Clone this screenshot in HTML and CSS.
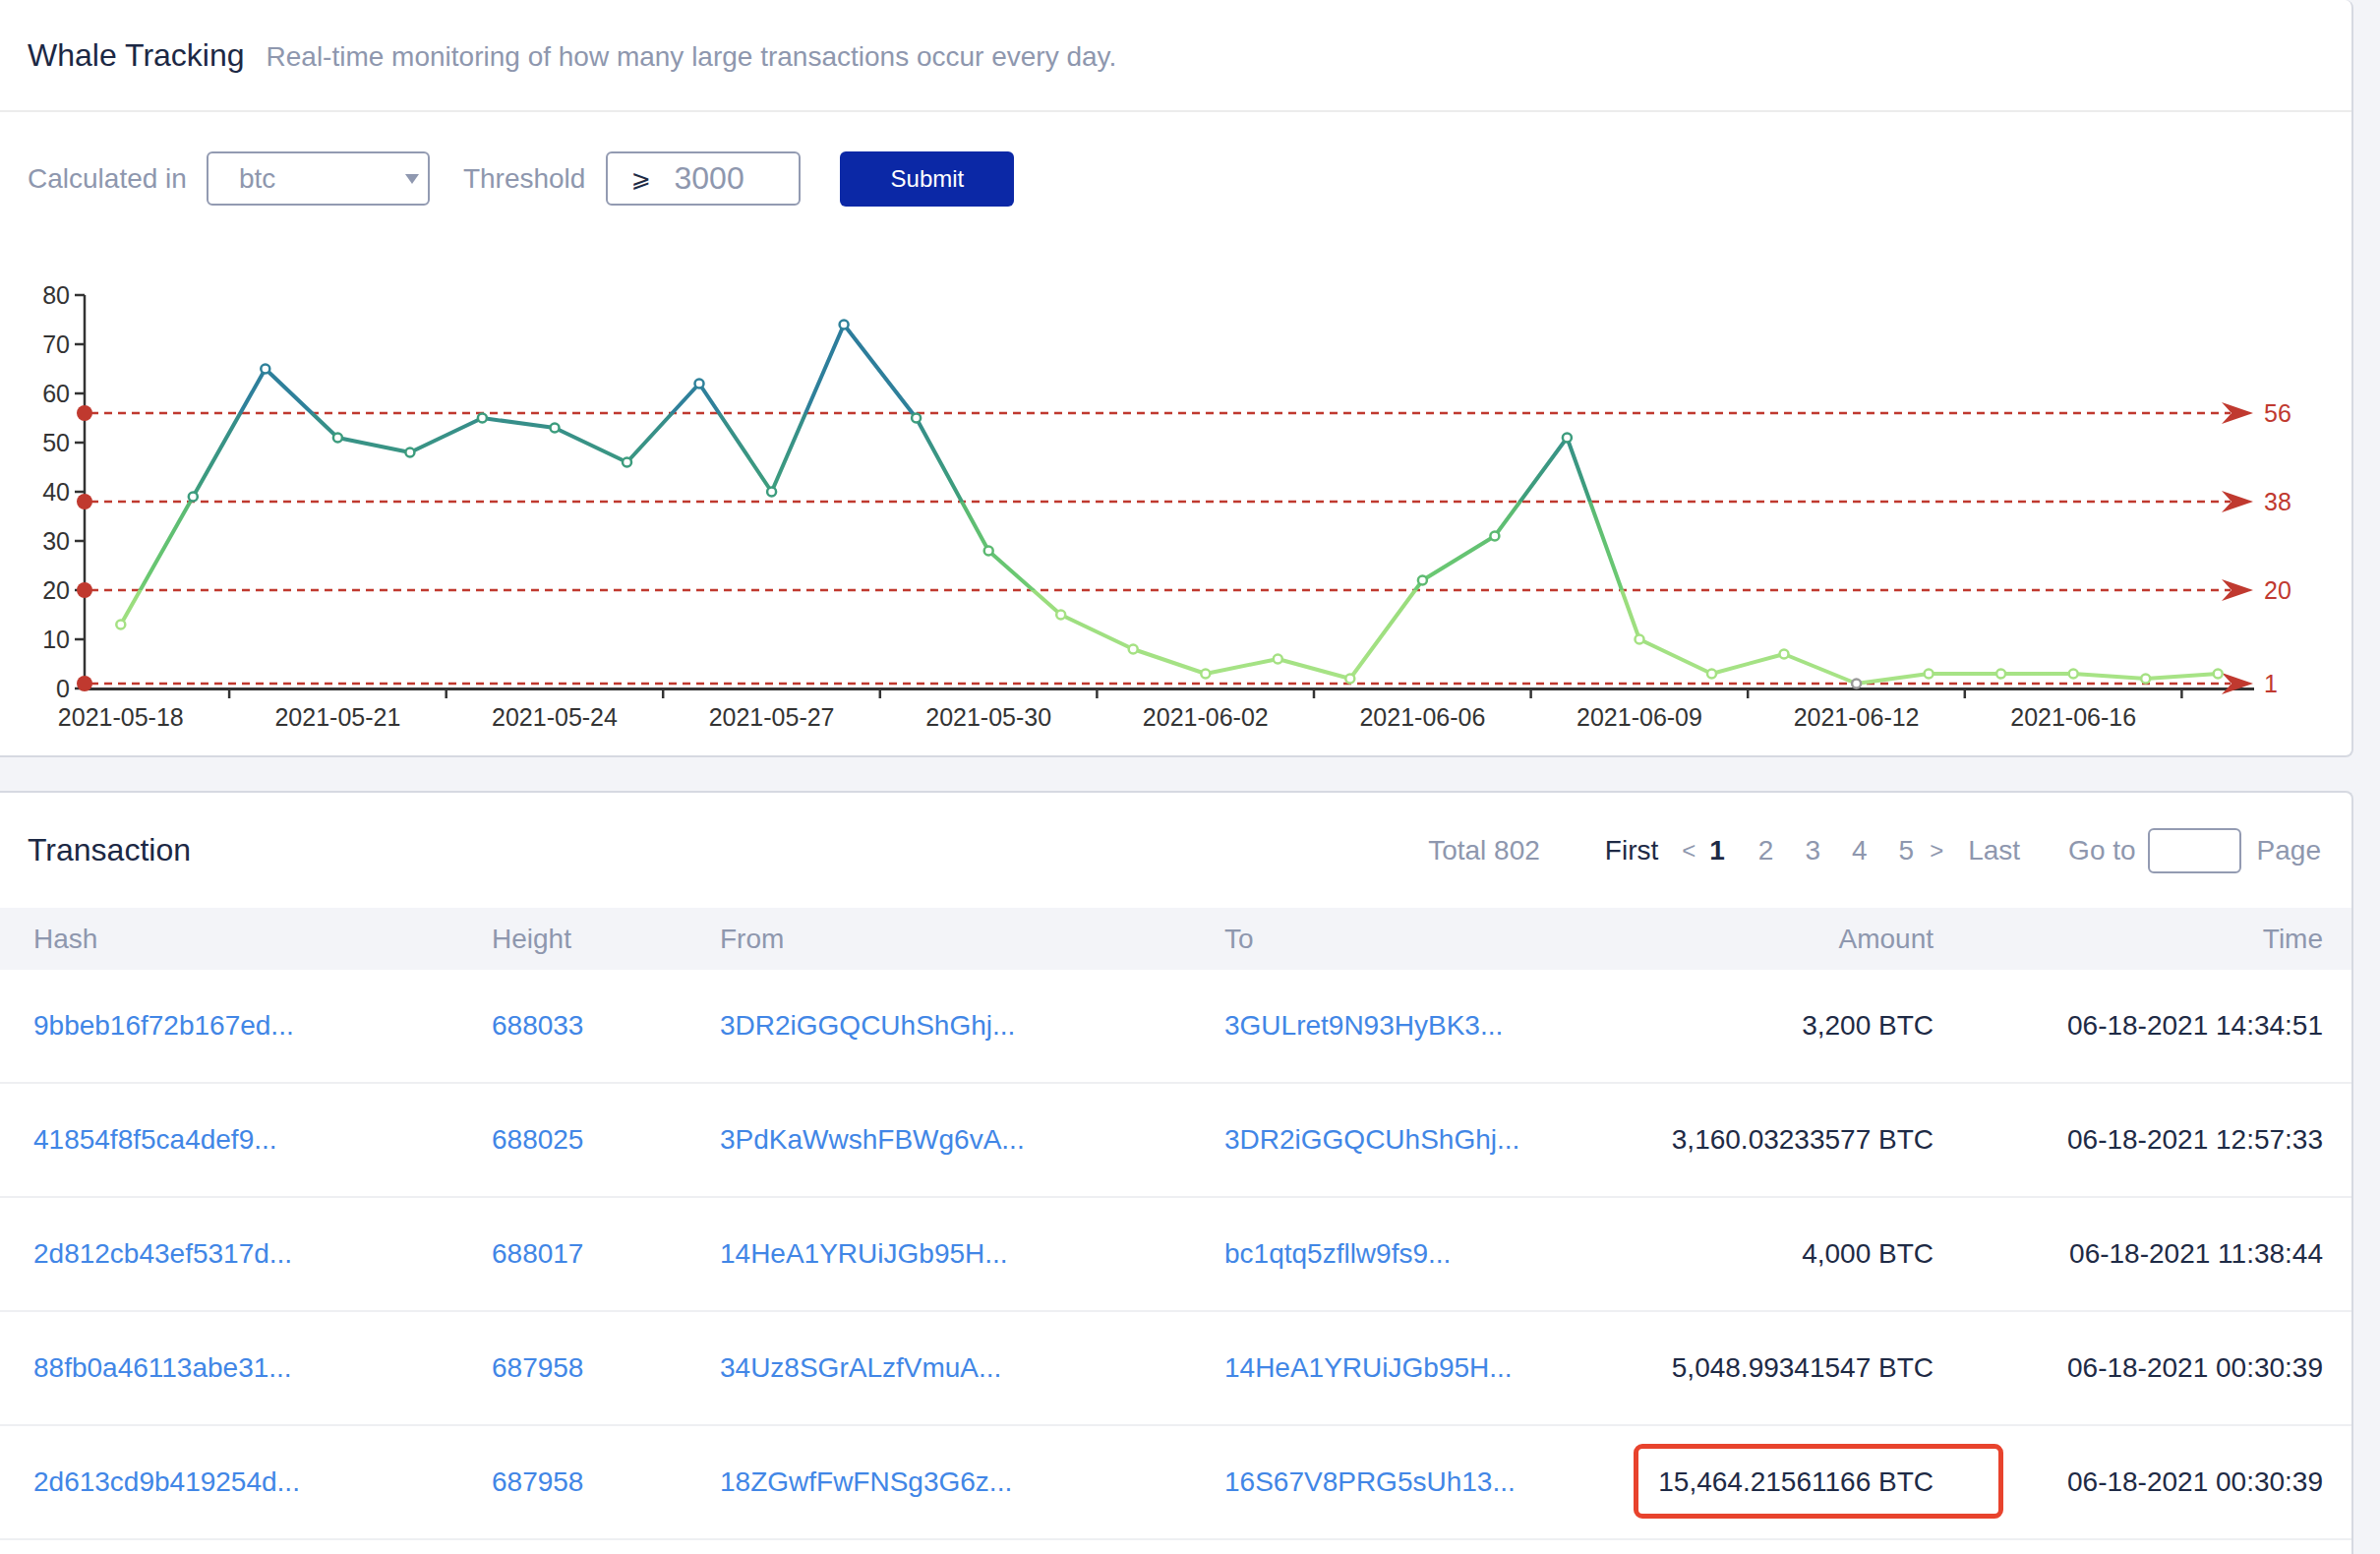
FILE: index.html
```html
<!DOCTYPE html>
<html lang="en">
<head>
<meta charset="utf-8">
<title>Whale Tracking</title>
<link rel="stylesheet" href="styles.css">
</head>
<body>
<div class="page">
  <section class="card chart-card">
    <header class="card-head">
      <h1 class="title">Whale Tracking</h1>
      <p class="subtitle">Real-time monitoring of how many large transactions occur every day.</p>
    </header>
    <div class="controls">
      <span class="ctl-label">Calculated in</span>
      <div class="select">
        <span>btc</span>
        <svg class="caret" width="14" height="10" viewBox="0 0 14 10"><polygon points="0,0 14,0 7,10" fill="#8f98b0"/></svg>
      </div>
      <span class="ctl-label threshold-label">Threshold</span>
      <div class="num-input"><span class="ge">⩾</span><span class="num">3000</span></div>
      <button class="submit" type="button">Submit</button>
    </div>
    <svg class="chart" width="2391" height="559" viewBox="0 209 2391 559" font-family="Liberation Sans, Arial, sans-serif">
      <defs>
        <linearGradient id="lg" gradientUnits="userSpaceOnUse" x1="0" y1="700" x2="0" y2="300">
          <stop offset="0" stop-color="#a9e487"/>
          <stop offset="0.25" stop-color="#98dc7c"/>
          <stop offset="0.25" stop-color="#6ecb72"/>
          <stop offset="0.475" stop-color="#59b973"/>
          <stop offset="0.475" stop-color="#3fa07b"/>
          <stop offset="0.7" stop-color="#358c8b"/>
          <stop offset="0.7" stop-color="#2f819a"/>
          <stop offset="1" stop-color="#2b7a9c"/>
        </linearGradient>
      </defs>
      <!-- y axis -->
      <g stroke="#333" stroke-width="2.5">
        <line x1="86" y1="300" x2="86" y2="701"/>
        <line x1="76" y1="300" x2="86" y2="300"/>
        <line x1="76" y1="350" x2="86" y2="350"/>
        <line x1="76" y1="400" x2="86" y2="400"/>
        <line x1="76" y1="450" x2="86" y2="450"/>
        <line x1="76" y1="500" x2="86" y2="500"/>
        <line x1="76" y1="550" x2="86" y2="550"/>
        <line x1="76" y1="600" x2="86" y2="600"/>
        <line x1="76" y1="650" x2="86" y2="650"/>
        <line x1="76" y1="700" x2="86" y2="700"/>
      </g>
      <g fill="#333" font-size="25" text-anchor="end">
        <text x="71" y="309">80</text>
        <text x="71" y="359">70</text>
        <text x="71" y="409">60</text>
        <text x="71" y="459">50</text>
        <text x="71" y="509">40</text>
        <text x="71" y="559">30</text>
        <text x="71" y="609">20</text>
        <text x="71" y="659">10</text>
        <text x="71" y="709">0</text>
      </g>
      <!-- x axis -->
      <g stroke="#333" stroke-width="2.5">
        <line x1="86" y1="700.5" x2="2292" y2="700.5" stroke-width="3"/>
        <line x1="233.1" y1="700" x2="233.1" y2="710"/>
        <line x1="453.7" y1="700" x2="453.7" y2="710"/>
        <line x1="674.2" y1="700" x2="674.2" y2="710"/>
        <line x1="894.8" y1="700" x2="894.8" y2="710"/>
        <line x1="1115.4" y1="700" x2="1115.4" y2="710"/>
        <line x1="1336" y1="700" x2="1336" y2="710"/>
        <line x1="1556.6" y1="700" x2="1556.6" y2="710"/>
        <line x1="1777.2" y1="700" x2="1777.2" y2="710"/>
        <line x1="1997.8" y1="700" x2="1997.8" y2="710"/>
        <line x1="2218.4" y1="700" x2="2218.4" y2="710"/>
      </g>
      <g fill="#333" font-size="25" text-anchor="middle">
        <text x="122.8" y="738">2021-05-18</text>
        <text x="343.4" y="738">2021-05-21</text>
        <text x="564" y="738">2021-05-24</text>
        <text x="784.6" y="738">2021-05-27</text>
        <text x="1005.2" y="738">2021-05-30</text>
        <text x="1225.8" y="738">2021-06-02</text>
        <text x="1446.4" y="738">2021-06-06</text>
        <text x="1667" y="738">2021-06-09</text>
        <text x="1887.6" y="738">2021-06-12</text>
        <text x="2108.2" y="738">2021-06-16</text>
      </g>
      <!-- mark lines -->
      <g stroke="#c0392f" stroke-width="2.5" stroke-dasharray="8 6">
        <line x1="92" y1="420" x2="2268" y2="420"/>
        <line x1="92" y1="510" x2="2268" y2="510"/>
        <line x1="92" y1="600" x2="2268" y2="600"/>
        <line x1="92" y1="695" x2="2268" y2="695"/>
      </g>
      <g fill="#c0392f">
        <circle cx="86" cy="420" r="8"/>
        <circle cx="86" cy="510" r="8"/>
        <circle cx="86" cy="600" r="8"/>
        <circle cx="86" cy="695" r="8"/>
        <path d="M2291,420 L2259,409 L2269,420 L2259,431 Z"/>
        <path d="M2291,510 L2259,499 L2269,510 L2259,521 Z"/>
        <path d="M2291,600 L2259,589 L2269,600 L2259,611 Z"/>
        <path d="M2291,695 L2259,684 L2269,695 L2259,706 Z"/>
      </g>
      <g fill="#c0392f" font-size="25">
        <text x="2302" y="429">56</text>
        <text x="2302" y="519">38</text>
        <text x="2302" y="609">20</text>
        <text x="2302" y="704">1</text>
      </g>
      <!-- series -->
      <polyline fill="none" stroke="url(#lg)" stroke-width="4" stroke-linejoin="round" points="122.8,635 196.3,505 269.8,375 343.4,445 416.9,460 490.4,425 564,435 637.5,470 711,390 784.6,500 858.1,330 931.6,425 1005.2,560 1078.7,625 1152.2,660 1225.8,685 1299.3,670 1372.8,690 1446.4,590 1519.9,545 1593.4,445 1667,650 1740.5,685 1814,665 1887.6,695 1961.1,685 2034.6,685 2108.2,685 2181.7,690 2255.2,685"/>
      <g fill="#fff" stroke-width="2.5">
        <circle cx="122.8" cy="635" r="4.5" stroke="#a5e183"/>
        <circle cx="196.3" cy="505" r="4.5" stroke="#3c9c7d"/>
        <circle cx="269.8" cy="375" r="4.5" stroke="#2f819a"/>
        <circle cx="343.4" cy="445" r="4.5" stroke="#3c9c7d"/>
        <circle cx="416.9" cy="460" r="4.5" stroke="#3c9c7d"/>
        <circle cx="490.4" cy="425" r="4.5" stroke="#3c9c7d"/>
        <circle cx="564" cy="435" r="4.5" stroke="#3c9c7d"/>
        <circle cx="637.5" cy="470" r="4.5" stroke="#3c9c7d"/>
        <circle cx="711" cy="390" r="4.5" stroke="#2f819a"/>
        <circle cx="784.6" cy="500" r="4.5" stroke="#3c9c7d"/>
        <circle cx="858.1" cy="330" r="4.5" stroke="#2f819a"/>
        <circle cx="931.6" cy="425" r="4.5" stroke="#3c9c7d"/>
        <circle cx="1005.2" cy="560" r="4.5" stroke="#5cb971"/>
        <circle cx="1078.7" cy="625" r="4.5" stroke="#a5e183"/>
        <circle cx="1152.2" cy="660" r="4.5" stroke="#a5e183"/>
        <circle cx="1225.8" cy="685" r="4.5" stroke="#a5e183"/>
        <circle cx="1299.3" cy="670" r="4.5" stroke="#a5e183"/>
        <circle cx="1372.8" cy="690" r="4.5" stroke="#a5e183"/>
        <circle cx="1446.4" cy="590" r="4.5" stroke="#5cb971"/>
        <circle cx="1519.9" cy="545" r="4.5" stroke="#5cb971"/>
        <circle cx="1593.4" cy="445" r="4.5" stroke="#3c9c7d"/>
        <circle cx="1667" cy="650" r="4.5" stroke="#a5e183"/>
        <circle cx="1740.5" cy="685" r="4.5" stroke="#a5e183"/>
        <circle cx="1814" cy="665" r="4.5" stroke="#a5e183"/>
        <circle cx="1887.6" cy="695" r="4.5" stroke="#9a9a9a"/>
        <circle cx="1961.1" cy="685" r="4.5" stroke="#a5e183"/>
        <circle cx="2034.6" cy="685" r="4.5" stroke="#a5e183"/>
        <circle cx="2108.2" cy="685" r="4.5" stroke="#a5e183"/>
        <circle cx="2181.7" cy="690" r="4.5" stroke="#a5e183"/>
        <circle cx="2255.2" cy="685" r="4.5" stroke="#a5e183"/>
      </g>
    </svg>
  </section>

  <section class="card tx-card">
    <div class="tx-head">
      <h2 class="tx-title">Transaction</h2>
      <nav class="pager">
        <span class="muted">Total 802</span>
        <span class="dark first">First</span>
        <span class="muted arrow prev">&lt;</span>
        <span class="dark current">1</span>
        <span class="muted pg pg2">2</span>
        <span class="muted pg">3</span>
        <span class="muted pg">4</span>
        <span class="muted pg">5</span>
        <span class="muted arrow next">&gt;</span>
        <span class="muted last">Last</span>
        <span class="muted goto">Go to</span>
        <span class="page-input"></span>
        <span class="muted page-word">Page</span>
      </nav>
    </div>
    <div class="table">
      <div class="row thead">
        <span class="cell">Hash</span>
        <span class="cell">Height</span>
        <span class="cell">From</span>
        <span class="cell">To</span>
        <span class="cell right">Amount</span>
        <span class="cell right">Time</span>
      </div>
      <div class="row trow">
        <span class="cell link">9bbeb16f72b167ed...</span>
        <span class="cell link">688033</span>
        <span class="cell link">3DR2iGGQCUhShGhj...</span>
        <span class="cell link">3GULret9N93HyBK3...</span>
        <span class="cell right dark">3,200 BTC</span>
        <span class="cell right dark">06-18-2021 14:34:51</span>
      </div>
      <div class="row trow">
        <span class="cell link">41854f8f5ca4def9...</span>
        <span class="cell link">688025</span>
        <span class="cell link">3PdKaWwshFBWg6vA...</span>
        <span class="cell link">3DR2iGGQCUhShGhj...</span>
        <span class="cell right dark">3,160.03233577 BTC</span>
        <span class="cell right dark">06-18-2021 12:57:33</span>
      </div>
      <div class="row trow">
        <span class="cell link">2d812cb43ef5317d...</span>
        <span class="cell link">688017</span>
        <span class="cell link">14HeA1YRUiJGb95H...</span>
        <span class="cell link">bc1qtq5zfllw9fs9...</span>
        <span class="cell right dark">4,000 BTC</span>
        <span class="cell right dark">06-18-2021 11:38:44</span>
      </div>
      <div class="row trow">
        <span class="cell link">88fb0a46113abe31...</span>
        <span class="cell link">687958</span>
        <span class="cell link">34Uz8SGrALzfVmuA...</span>
        <span class="cell link">14HeA1YRUiJGb95H...</span>
        <span class="cell right dark">5,048.99341547 BTC</span>
        <span class="cell right dark">06-18-2021 00:30:39</span>
      </div>
      <div class="row trow">
        <span class="cell link">2d613cd9b419254d...</span>
        <span class="cell link">687958</span>
        <span class="cell link">18ZGwfFwFNSg3G6z...</span>
        <span class="cell link">16S67V8PRG5sUh13...</span>
        <span class="cell right dark amount">15,464.21561166 BTC<span class="highlight"></span></span>
        <span class="cell right dark">06-18-2021 00:30:39</span>
      </div>
    </div>
  </section>
</div>
</body>
</html>
```

FILE: styles.css
```css
html, body {
  margin: 0;
  padding: 0;
}

body {
  background: #f3f4f8;
  font-family: "Liberation Sans", Arial, sans-serif;
  color: #1e2a45;
}

.page {
  width: 2420px;
  padding-right: 27px;
  box-sizing: border-box;
}

.card {
  background: #ffffff;
  border-right: 2px solid #d6d9e1;
}

.chart-card {
  border-bottom: 2px solid #d6d9e1;
  border-radius: 0 8px 8px 0;
}

.card-head {
  display: flex;
  align-items: baseline;
  height: 114px;
  box-sizing: border-box;
  padding: 36px 0 0 28px;
  border-bottom: 2px solid #ececec;
}

.title {
  margin: 0;
  font-size: 32px;
  line-height: 40px;
  font-weight: normal;
  color: #1c2844;
}

.subtitle {
  margin: 0 0 0 22px;
  font-size: 28px;
  line-height: 40px;
  color: #8e97ae;
}

.controls {
  display: flex;
  align-items: center;
  height: 55px;
  padding: 40px 0 0 28px;
}

.ctl-label {
  font-size: 28px;
  color: #8e97ae;
}

.select {
  display: flex;
  align-items: center;
  justify-content: space-between;
  width: 227px;
  height: 55px;
  box-sizing: border-box;
  margin-left: 20px;
  padding: 0 9px 0 31px;
  border: 2px solid #939bb2;
  border-radius: 6px;
  font-size: 28px;
  color: #8e97ae;
}

.caret {
  display: block;
}

.threshold-label {
  margin-left: 34px;
}

.num-input {
  display: flex;
  align-items: center;
  width: 198px;
  height: 55px;
  box-sizing: border-box;
  margin-left: 21px;
  padding-left: 23px;
  border: 2px solid #939bb2;
  border-radius: 6px;
}

.ge {
  font-family: "DejaVu Sans", "Liberation Sans", sans-serif;
  font-size: 24px;
  color: #1e2a45;
}

.num {
  margin-left: 24px;
  font-size: 32px;
  color: #8e97ae;
}

.submit {
  width: 177px;
  height: 56px;
  margin-left: 40px;
  border: none;
  border-radius: 6px;
  background: #0b28a6;
  color: #ffffff;
  font-family: "Liberation Sans", Arial, sans-serif;
  font-size: 24px;
}

.chart {
  display: block;
}

.tx-card {
  margin-top: 34px;
  border-top: 2px solid #d6d9e1;
  border-radius: 0 8px 0 0;
  padding-bottom: 40px;
}

.tx-head {
  display: flex;
  align-items: center;
  height: 117px;
  padding-left: 28px;
}

.tx-title {
  margin: 0;
  font-size: 32px;
  font-weight: normal;
  color: #1c2844;
}

.pager {
  display: flex;
  align-items: center;
  margin-left: auto;
  padding-right: 31px;
  font-size: 28px;
}

.muted {
  color: #8e97ae;
}

.dark {
  color: #1e2a45;
}

.first {
  margin-left: 66px;
}

.arrow {
  font-size: 24px;
}

.prev {
  margin-left: 24px;
}

.current {
  margin-left: 14px;
  font-weight: bold;
}

.pg {
  margin-left: 32px;
}

.pg2 {
  margin-left: 34px;
}

.next {
  margin-left: 16px;
}

.last {
  margin-left: 25px;
}

.goto {
  margin-left: 49px;
}

.page-input {
  display: block;
  width: 95px;
  height: 46px;
  box-sizing: border-box;
  margin-left: 12px;
  border: 2px solid #939bb2;
  border-radius: 6px;
}

.page-word {
  margin-left: 16px;
}

.row {
  display: grid;
  grid-template-columns: 466px 232px 513px 355px 366px 396px;
  padding: 0 29px 0 34px;
  font-size: 28px;
}

.thead {
  height: 63px;
  align-items: center;
  background: #f3f4f8;
  color: #8e97ae;
}

.trow {
  height: 114px;
  border-bottom: 2px solid #eeeff2;
}

.cell {
  display: flex;
  align-items: center;
  white-space: nowrap;
}

.right {
  justify-content: flex-end;
}

.link {
  color: #4186e6;
}

.amount {
  position: relative;
}

.highlight {
  position: absolute;
  left: 61px;
  right: -71px;
  top: 18px;
  bottom: 20px;
  border: 5px solid #e8432d;
  border-radius: 9px;
}
```
